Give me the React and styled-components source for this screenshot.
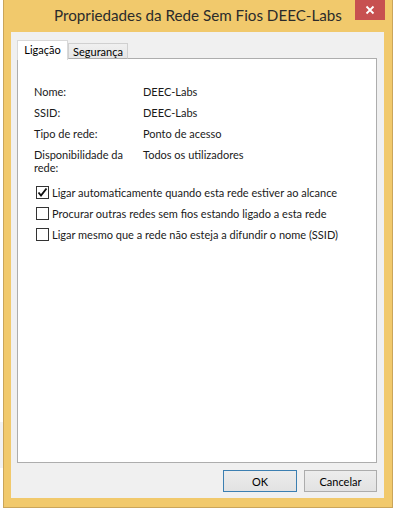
import React from "react";
import styled, { createGlobalStyle } from "styled-components";

const GlobalStyle = createGlobalStyle`
  html, body {
    margin: 0;
    padding: 0;
    background: #ffffff;
  }
  body {
    font-family: Lato, "Noto Sans", sans-serif;
    font-size: 11px;
    color: #1a1a1a;
  }
`;

const Page = styled.div`
  position: relative;
  width: 393px;
  height: 510px;
  overflow: hidden;
  padding-left: 3px;
  box-sizing: border-box;
  background: #ffffff;
`;

const BehindStrip = styled.div`
  position: absolute;
  left: 0;
  top: ${(p) => p.$top}px;
  width: 3px;
  height: ${(p) => p.$h}px;
  background: ${(p) => p.$bg};
`;

const Window = styled.div`
  position: relative;
  width: 390px;
  height: 508px;
  box-sizing: border-box;
  border: 1px solid #caa55a;
  border-top: 0;
  background: #f1c96c;
  display: flex;
  flex-direction: column;
`;

const TitleBar = styled.div`
  position: relative;
  height: 32px;
  display: flex;
  align-items: center;
  justify-content: center;
  font-size: 15.2px;
  color: #2b2b2b;
  padding-bottom: 2px;
  box-sizing: border-box;
  white-space: nowrap;
`;

const CloseButton = styled.div`
  position: absolute;
  top: 0;
  right: 7px;
  width: 30px;
  height: 20px;
  background: #c75050;
  display: flex;
  align-items: center;
  justify-content: center;
`;

const Client = styled.div`
  flex: 1;
  margin: 0 8px 9px 7px;
  background: #f0f0f0;
  padding: 8px 7px 6px 6px;
  display: flex;
  flex-direction: column;
  box-sizing: border-box;
`;

const TabRow = styled.div`
  display: flex;
  align-items: flex-end;
  height: 19px;
  position: relative;
  z-index: 1;
  margin-bottom: -1px;
`;

const Tab = styled.div`
  box-sizing: border-box;
  width: ${(p) => p.$w}px;
  height: ${(p) => (p.$active ? 20 : 16)}px;
  display: flex;
  align-items: center;
  justify-content: center;
  border: 1px solid ${(p) => (p.$active ? "#d9d9d9" : "#d0d0d0")};
  border-bottom: ${(p) => (p.$active ? "0" : "1px solid #adadad")};
  background: ${(p) =>
    p.$active ? "#ffffff" : "linear-gradient(#f0f0f0, #e6e6e6)"};
  color: #000;
  margin-bottom: ${(p) => (p.$active ? -1 : 0)}px;
  padding-bottom: ${(p) => (p.$active ? 3 : 0)}px;
`;

const Panel = styled.div`
  flex: 1;
  background: #ffffff;
  border: 1px solid #adadad;
  padding: 26px 16px 0 16px;
  box-sizing: border-box;
`;

const InfoGrid = styled.div`
  display: grid;
  grid-template-columns: 109px 1fr;
  row-gap: 8px;
  line-height: 13px;
`;

const Label = styled.div`
  width: 96px;
`;

const Value = styled.div``;

const CheckList = styled.div`
  margin-top: 11px;
  margin-left: 2px;
  display: flex;
  flex-direction: column;
  gap: 6px;
`;

const CheckRow = styled.label`
  display: flex;
  align-items: center;
  gap: 3px;
  height: 15px;
  white-space: nowrap;
`;

const Box = styled.span`
  width: 13px;
  height: 13px;
  flex: none;
  box-sizing: border-box;
  border: 1px solid #333333;
  background: #ffffff;
  display: flex;
  align-items: center;
  justify-content: center;
`;

const ButtonRow = styled.div`
  display: flex;
  justify-content: flex-end;
  gap: 7px;
  margin-top: 7px;
`;

const Button = styled.div`
  width: ${(p) => p.$w}px;
  height: 22px;
  box-sizing: border-box;
  border: 1px solid ${(p) => (p.$primary ? "#3c7fb1" : "#acacac")};
  background: linear-gradient(#ececec, #e2e2e2);
  display: flex;
  align-items: center;
  justify-content: center;
  color: #000;
`;

const info = [
  ["Nome:", "DEEC-Labs"],
  ["SSID:", "DEEC-Labs"],
  ["Tipo de rede:", "Ponto de acesso"],
  ["Disponibilidade da rede:", "Todos os utilizadores"],
];

const options = [
  ["Ligar automaticamente quando esta rede estiver ao alcance", true],
  ["Procurar outras redes sem fios estando ligado a esta rede", false],
  ["Ligar mesmo que a rede não esteja a difundir o nome (SSID)", false],
];

function Check({ checked }) {
  return (
    <Box>
      {checked && (
        <svg width="11" height="11" viewBox="0 0 11 11">
          <path
            d="M1.5 5.5 L4 8.5 L9.5 1.5"
            fill="none"
            stroke="#111"
            strokeWidth="1.9"
          />
        </svg>
      )}
    </Box>
  );
}

export default function App() {
  return (
    <>
      <GlobalStyle />
      <Page>
        <BehindStrip $top={422} $h={46} $bg="#f2f2f2" />
        <Window>
          <TitleBar>
            Propriedades da Rede Sem Fios DEEC-Labs
            <CloseButton>
              <svg width="10" height="10" viewBox="0 0 10 10">
                <path
                  d="M1.5 1.5 L8.5 8.5 M8.5 1.5 L1.5 8.5"
                  stroke="#fff"
                  strokeWidth="1.8"
                />
              </svg>
            </CloseButton>
          </TitleBar>
          <Client>
            <TabRow>
              <Tab $active $w={51}>
                Ligação
              </Tab>
              <Tab $w={60}>Segurança</Tab>
            </TabRow>
            <Panel>
              <InfoGrid>
                {info.map(([l, v]) => (
                  <React.Fragment key={l}>
                    <Label>{l}</Label>
                    <Value>{v}</Value>
                  </React.Fragment>
                ))}
              </InfoGrid>
              <CheckList>
                {options.map(([t, c]) => (
                  <CheckRow key={t}>
                    <Check checked={c} />
                    {t}
                  </CheckRow>
                ))}
              </CheckList>
            </Panel>
            <ButtonRow>
              <Button $primary $w={74}>
                OK
              </Button>
              <Button $w={73}>Cancelar</Button>
            </ButtonRow>
          </Client>
        </Window>
      </Page>
    </>
  );
}
